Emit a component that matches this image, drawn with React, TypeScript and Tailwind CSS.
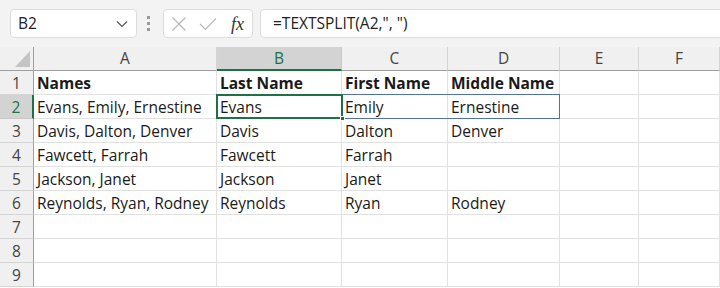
import React from 'react';

const cols = ['A', 'B', 'C', 'D', 'E', 'F'];

const rows: string[][] = [
  ['Names', 'Last Name', 'First Name', 'Middle Name', '', ''],
  ['Evans, Emily, Ernestine', 'Evans', 'Emily', 'Ernestine', '', ''],
  ['Davis, Dalton, Denver', 'Davis', 'Dalton', 'Denver', '', ''],
  ['Fawcett, Farrah', 'Fawcett', 'Farrah', '', '', ''],
  ['Jackson, Janet', 'Jackson', 'Janet', '', '', ''],
  ['Reynolds, Ryan, Rodney', 'Reynolds', 'Ryan', 'Rodney', '', ''],
  ['', '', '', '', '', ''],
  ['', '', '', '', '', ''],
  ['', '', '', '', '', ''],
];

function Toolbar() {
  return (
    <div className="flex h-[47px] items-center bg-[#f3f3f3]">
      {/* name box */}
      <div className="ml-[10px] flex h-[29px] w-[127px] items-center justify-between rounded-[4px] border border-[#dcdcdc] bg-white pl-[7px] pr-[8px]">
        <span className="text-[15.5px] text-[#222]">B2</span>
        <svg width="12" height="8" viewBox="0 0 12 8" fill="none">
          <path d="M1 1.5 L6 6.5 L11 1.5" stroke="#555" strokeWidth="1.2" />
        </svg>
      </div>
      {/* grip dots */}
      <div className="ml-[10px] flex w-[4px] flex-col gap-[3px]">
        <div className="h-[3px] w-[3px] bg-[#9a9a9a]" />
        <div className="h-[3px] w-[3px] bg-[#9a9a9a]" />
        <div className="h-[3px] w-[3px] bg-[#9a9a9a]" />
      </div>
      {/* cancel / enter / fx */}
      <div className="ml-[12px] flex h-[29px] w-[90px] items-center rounded-[4px] border border-[#dcdcdc] bg-white pl-[7px]">
        <svg width="16" height="16" viewBox="0 0 16 16" fill="none">
          <path d="M1.5 1.5 L14.5 14.5 M14.5 1.5 L1.5 14.5" stroke="#b8b8b8" strokeWidth="1.2" />
        </svg>
        <svg className="ml-[12px]" width="18" height="14" viewBox="0 0 18 14" fill="none">
          <path d="M1 7 L6.5 12.5 L17 1.5" stroke="#b8b8b8" strokeWidth="1.2" />
        </svg>
        <span className="ml-[14px] text-[18px] italic leading-none text-[#333] [font-family:'Liberation_Serif',serif]">fx</span>
      </div>
      {/* formula bar */}
      <div className="ml-[7px] -mr-[6px] flex h-[29px] flex-1 items-center rounded-[4px] border border-[#dcdcdc] bg-white pl-[12px]">
        <span className="text-[15.5px] text-[#222]">=TEXTSPLIT(A2,", ")</span>
      </div>
    </div>
  );
}

function Sheet() {
  return (
    <div className="relative">
      <div className="grid grid-cols-[34px_183px_125px_106px_112px_79px_1fr]">
        {/* corner */}
        <div className="relative h-[24px] border-b border-r border-[#9f9f9f] bg-[#f0f0f0]">
          <svg className="absolute left-[15px] top-[4px]" width="15" height="16" viewBox="0 0 15 16">
            <path d="M15 0 L15 16 L0 16 Z" fill="#c4c4c4" />
          </svg>
        </div>
        {cols.map((c) => (
          <div
            key={c}
            className={
              c === 'B'
                ? 'flex h-[24px] items-center justify-center border-b-2 border-r border-b-[#1e7145] border-r-[#c8c8c8] bg-[#d3d3d3] pt-[1px] text-[15.5px] text-[#1e7145]'
                : 'flex h-[24px] items-center justify-center border-b border-r border-b-[#9f9f9f] border-r-[#d4d4d4] bg-[#f0f0f0] pt-[1px] text-[15.5px] text-[#444]'
            }
          >
            {c}
          </div>
        ))}
        {rows.map((r, i) => (
          <React.Fragment key={i}>
            <div
              className={
                i === 1
                  ? 'flex h-[24px] items-center justify-center border-b border-r-2 border-b-[#c8c8c8] border-r-[#1e7145] bg-[#d3d3d3] pt-[2px] text-[15.5px] text-[#1e7145]'
                  : 'flex h-[24px] items-center justify-center border-b border-r border-b-[#d4d4d4] border-r-[#9f9f9f] bg-[#f0f0f0] pt-[2px] text-[15.5px] text-[#444]'
              }
            >
              {i + 1}
            </div>
            {r.map((v, j) => (
              <div
                key={j}
                className={
                  'flex h-[24px] items-center overflow-visible whitespace-nowrap border-b border-r border-[#e1e1e1] bg-white pl-[3px] pt-[2px] text-[15.5px] text-[#1a1a1a]' +
                  (i === 0 ? ' font-bold' : '')
                }
              >
                {v}
              </div>
            ))}
          </React.Fragment>
        ))}
      </div>
      {/* spill range outline */}
      <div className="pointer-events-none absolute left-[342px] top-[47px] h-[25px] w-[218px] border border-[#4f6fad]" />
      {/* active cell */}
      <div className="pointer-events-none absolute left-[216px] top-[47px] h-[25px] w-[127px] border-2 border-[#1e7145]" />
      <div className="pointer-events-none absolute left-[340px] top-[69px] h-[5px] w-[5px] border border-white bg-[#1e7145]" />
    </div>
  );
}

export default function App() {
  return (
    <div className="h-[288px] w-[720px] overflow-hidden bg-white [font-family:'Open_Sans','Noto_Sans',sans-serif]">
      <Toolbar />
      <Sheet />
    </div>
  );
}
